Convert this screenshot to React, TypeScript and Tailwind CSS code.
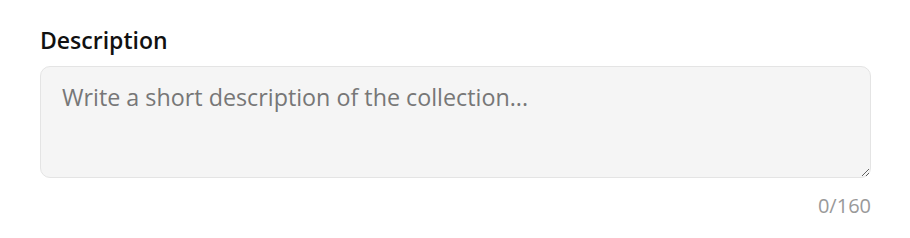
export default function App() {
  return (
    <div
      className="w-[910px] h-[238px] bg-white pl-10 pr-[39px] pt-[26px]"
      style={{ fontFamily: '"Open Sans", "Noto Sans", sans-serif' }}
    >
      <label className="block text-[23px] font-semibold leading-[28px] text-[#111]">
        Description
      </label>
      <textarea
        placeholder="Write a short description of the collection..."
        className="mt-[12px] block h-[112px] w-full resize-y rounded-[10px] border border-[#e4e4e4] bg-[#f5f5f5] px-[21px] py-[15px] text-[23.3px] leading-[30px] text-[#222] placeholder:text-[#777] outline-none"
      />
      <div className="mt-[16px] text-right text-[20px] leading-[24px] text-[#999]">
        0/160
      </div>
    </div>
  );
}
